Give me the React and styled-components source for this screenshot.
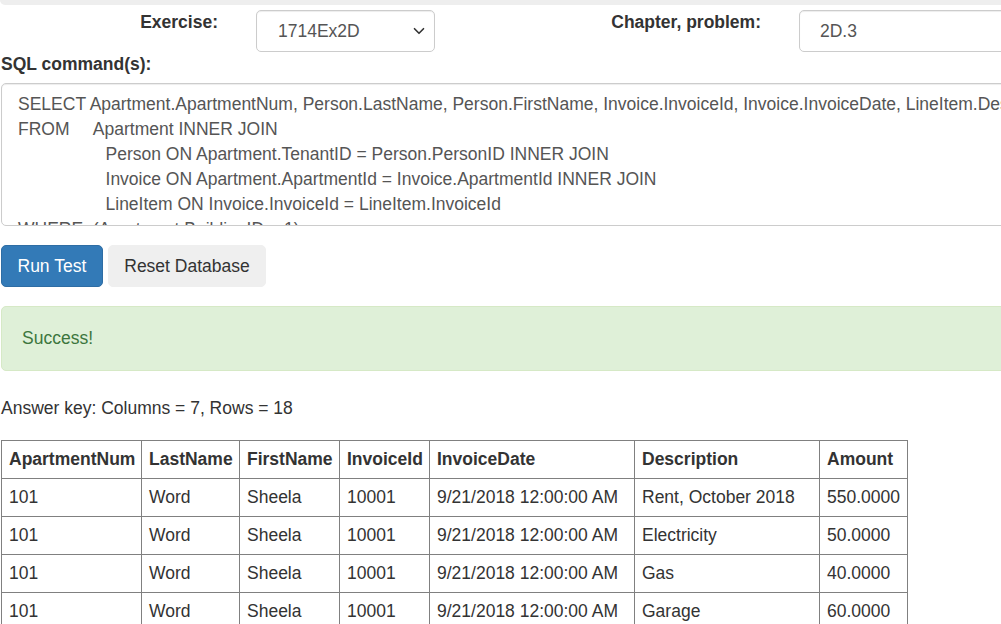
import React from 'react';
import styled, { createGlobalStyle } from 'styled-components';
import { ChevronDown } from 'lucide-react';

const GlobalStyle = createGlobalStyle`
  html, body {
    margin: 0;
    padding: 0;
    overflow: hidden;
    background: #fff;
  }
  body {
    font-family: "Liberation Sans", Arial, sans-serif;
    font-size: 17.5px;
    line-height: 25px;
    color: #333;
  }
  * { box-sizing: border-box; }
`;

const Page = styled.div`
  width: 1180px;
  padding-left: 1px;
`;

const TopStrip = styled.div`
  height: 4.5px;
  margin: 0 0 5.5px -1px;
  background: #eee;
  border-bottom-left-radius: 6px;
`;

const FormRow = styled.div`
  display: grid;
  grid-template-columns: 217px 179px 288px 380px;
  column-gap: 38px;
  align-items: start;
`;

const Label = styled.label`
  display: block;
  font-weight: bold;
  text-align: ${p => (p.$right ? 'right' : 'left')};
  margin-bottom: ${p => (p.$right ? '0' : '6px')};
`;

const SelectBox = styled.div`
  height: 42px;
  display: flex;
  align-items: center;
  justify-content: space-between;
  padding: 0 6px 0 21px;
  border: 1px solid #ccc;
  border-radius: 5px;
  color: #555;
  box-shadow: inset 0 1px 1px rgba(0, 0, 0, 0.075);
`;

const TextInput = styled.div`
  height: 42px;
  display: flex;
  align-items: center;
  padding: 0 20px;
  border: 1px solid #ccc;
  border-radius: 5px;
  color: #555;
  box-shadow: inset 0 1px 1px rgba(0, 0, 0, 0.075);
`;

const SqlArea = styled.textarea`
  display: block;
  width: 100%;
  height: 143px;
  margin: 0 0 19px;
  padding: 7.5px 16px;
  font-family: "Liberation Sans", Arial, sans-serif;
  font-size: 17.5px;
  line-height: 25px;
  color: #555;
  border: 1px solid #ccc;
  border-radius: 5px;
  box-shadow: inset 0 1px 1px rgba(0, 0, 0, 0.075);
  resize: none;
  overflow: hidden;
  white-space: pre;
`;

const ButtonRow = styled.div`
  display: flex;
  gap: 5px;
  margin-bottom: 19px;
`;

const Button = styled.button`
  font-family: "Liberation Sans", Arial, sans-serif;
  font-size: 17.5px;
  line-height: 25px;
  padding: 7.5px 15.5px;
  border-radius: 5px;
  border: 1px solid ${p => (p.$primary ? '#2e6da4' : '#efefef')};
  background: ${p => (p.$primary ? '#337ab7' : '#efefef')};
  color: ${p => (p.$primary ? '#fff' : '#333')};
  cursor: pointer;
`;

const Alert = styled.div`
  padding: 18.75px 20px;
  margin-bottom: 25px;
  background: #dff0d8;
  border: 1px solid #d6e9c6;
  border-radius: 5px;
  color: #3c763d;
`;

const Summary = styled.p`
  margin: 0 0 19px;
`;

const Table = styled.table`
  border-collapse: collapse;
  table-layout: fixed;
  width: 906px;
`;

const Th = styled.th`
  border: 1px solid #808080;
  padding: 6px 7px;
  text-align: left;
  font-weight: bold;
  white-space: nowrap;
  overflow: hidden;
`;

const Td = styled.td`
  border: 1px solid #808080;
  padding: 6px 7px;
  white-space: nowrap;
  overflow: hidden;
`;

const sql = [
  'SELECT Apartment.ApartmentNum, Person.LastName, Person.FirstName, Invoice.InvoiceId, Invoice.InvoiceDate, LineItem.Description, LineItem.Amount',
  'FROM     Apartment INNER JOIN',
  '                  Person ON Apartment.TenantID = Person.PersonID INNER JOIN',
  '                  Invoice ON Apartment.ApartmentId = Invoice.ApartmentId INNER JOIN',
  '                  LineItem ON Invoice.InvoiceId = LineItem.InvoiceId',
  'WHERE  (Apartment.BuildingID = 1)',
].join('\n');

const columns = [
  { name: 'ApartmentNum', width: 140 },
  { name: 'LastName', width: 98 },
  { name: 'FirstName', width: 100 },
  { name: 'InvoiceId', width: 90 },
  { name: 'InvoiceDate', width: 205 },
  { name: 'Description', width: 185 },
  { name: 'Amount', width: 88 },
];

const rows = [
  ['101', 'Word', 'Sheela', '10001', '9/21/2018 12:00:00 AM', 'Rent, October 2018', '550.0000'],
  ['101', 'Word', 'Sheela', '10001', '9/21/2018 12:00:00 AM', 'Electricity', '50.0000'],
  ['101', 'Word', 'Sheela', '10001', '9/21/2018 12:00:00 AM', 'Gas', '40.0000'],
  ['101', 'Word', 'Sheela', '10001', '9/21/2018 12:00:00 AM', 'Garage', '60.0000'],
];

function App() {
  return (
    <>
      <GlobalStyle />
      <Page>
        <TopStrip />
        <FormRow>
          <Label $right>Exercise:</Label>
          <SelectBox>
            <span>1714Ex2D</span>
            <ChevronDown size={18} strokeWidth={2.2} color="#333" />
          </SelectBox>
          <Label $right>Chapter, problem:</Label>
          <TextInput>2D.3</TextInput>
        </FormRow>
        <Label>SQL command(s):</Label>
        <SqlArea readOnly wrap="off" value={sql} />
        <ButtonRow>
          <Button $primary>Run Test</Button>
          <Button>Reset Database</Button>
        </ButtonRow>
        <Alert>Success!</Alert>
        <Summary>Answer key: Columns = 7, Rows = 18</Summary>
        <Table>
          <colgroup>
            {columns.map(c => <col key={c.name} style={{ width: c.width }} />)}
          </colgroup>
          <thead>
            <tr>
              {columns.map(c => <Th key={c.name}>{c.name}</Th>)}
            </tr>
          </thead>
          <tbody>
            {rows.map((r, i) => (
              <tr key={i}>
                {r.map((v, j) => <Td key={j}>{v}</Td>)}
              </tr>
            ))}
          </tbody>
        </Table>
      </Page>
    </>
  );
}

export default App;
